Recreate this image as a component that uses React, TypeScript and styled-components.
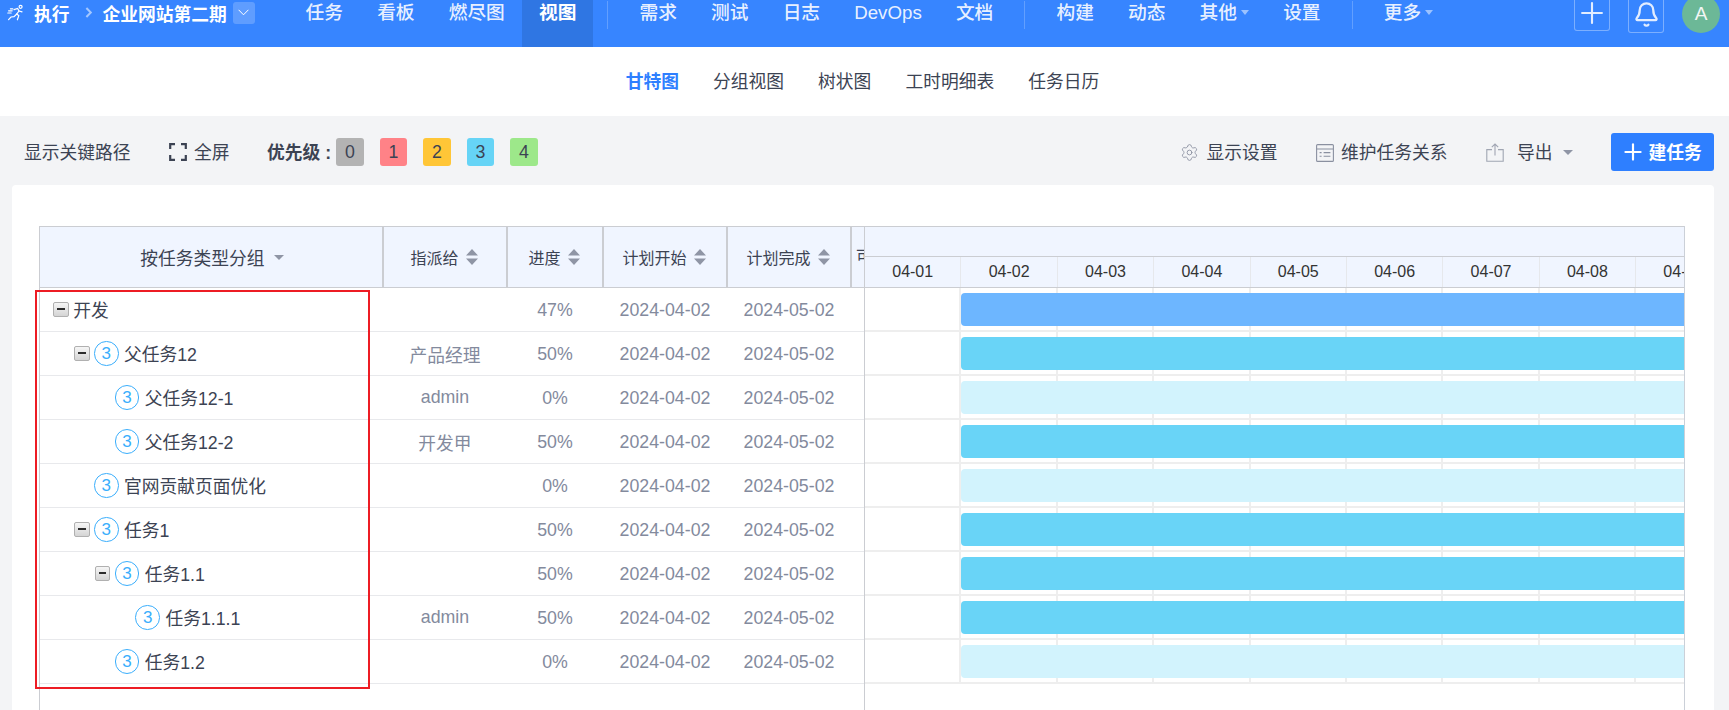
import React from 'react';
import styled, { createGlobalStyle } from 'styled-components';
import { Bell, Plus, Settings } from 'lucide-react';

const GlobalStyle = createGlobalStyle`
    html, body {
        margin: 0;
        height: 100%;
        overflow: hidden;
        background: #f3f4f6;
        color: #3c4353;
        font-family: 'Liberation Sans', 'Noto Sans CJK SC', sans-serif;
        font-size: 17.75px;
    }
    #root {
        height: 100%;
    }
`;

type NavEntry = { label: string; active?: boolean; caret?: boolean };

const navGroups: NavEntry[][] = [
    [{ label: '任务' }, { label: '看板' }, { label: '燃尽图' }, { label: '视图', active: true }],
    [{ label: '需求' }, { label: '测试' }, { label: '日志' }, { label: 'DevOps' }, { label: '文档' }],
    [{ label: '构建' }, { label: '动态' }, { label: '其他', caret: true }, { label: '设置' }],
    [{ label: '更多', caret: true }],
];

const subTabs = ['甘特图', '分组视图', '树状图', '工时明细表', '任务日历'];

const priorities = [
    { level: 0, color: '#b3b3b3' },
    { level: 1, color: '#ff8287' },
    { level: 2, color: '#ffc637' },
    { level: 3, color: '#66d4f6' },
    { level: 4, color: '#9de88a' },
];

const days = ['04-01', '04-02', '04-03', '04-04', '04-05', '04-06', '04-07', '04-08', '04-09'];

const MID = '#69d4f7';
const PALE = '#d2f3fd';
const GROUP = '#6db6ff';

type Task = {
    title: string;
    depth: number;
    toggle?: boolean;
    badge?: boolean;
    owner?: string;
    progress: string;
    bar: string;
};

const tasks: Task[] = [
    { title: '开发', depth: 0, toggle: true, progress: '47%', bar: GROUP },
    { title: '父任务12', depth: 1, toggle: true, badge: true, owner: '产品经理', progress: '50%', bar: MID },
    { title: '父任务12-1', depth: 2, badge: true, owner: 'admin', progress: '0%', bar: PALE },
    { title: '父任务12-2', depth: 2, badge: true, owner: '开发甲', progress: '50%', bar: MID },
    { title: '官网贡献页面优化', depth: 1, badge: true, progress: '0%', bar: PALE },
    { title: '任务1', depth: 1, toggle: true, badge: true, progress: '50%', bar: MID },
    { title: '任务1.1', depth: 2, toggle: true, badge: true, progress: '50%', bar: MID },
    { title: '任务1.1.1', depth: 3, badge: true, owner: 'admin', progress: '50%', bar: MID },
    { title: '任务1.2', depth: 2, badge: true, progress: '0%', bar: PALE },
];

const columns = [
    { label: '指派给' },
    { label: '进度' },
    { label: '计划开始' },
    { label: '计划完成' },
];

const RunnerIcon = () => (
    <svg width="17" height="17" viewBox="0 0 17 17" fill="none" stroke="#fff" strokeWidth="1.2" strokeLinecap="round">
        <circle cx="13.6" cy="2.8" r="1.5" />
        <path d="M7 5.6l3.6-1.2 1.4 2.6-2.2 3 2 1.8-1.4 4" />
        <path d="M9.8 10L7 12.6l-3 .4-2.4 2.6" />
        <path d="M12 7l3 .8" />
        <path d="M1.6 6.8h3.6M.8 9h3.4M3.4 4.8h2.4" />
    </svg>
);

const FullscreenIcon = () => (
    <svg width="18" height="18" viewBox="0 0 18 18" fill="none" stroke="#3c4353" strokeWidth="2.2">
        <path d="M1.2 6V1.2H6M12 1.2h4.8V6M16.8 12v4.8H12M6 16.8H1.2V12" />
    </svg>
);

const RelationIcon = () => (
    <svg width="18" height="19" viewBox="0 0 18 19" fill="none" stroke="#8a90a0" strokeWidth="1.1">
        <rect x="0.6" y="1.6" width="16.8" height="16.8" rx="1" />
        <path d="M.6 6h16.8M3.6 9.6h2M7.6 9.6h6.8M3.6 13.2h2M7.6 13.2h6.8" />
    </svg>
);

const ExportIcon = () => (
    <svg width="18" height="19" viewBox="0 0 18 19" fill="none" stroke="#a0a5b2" strokeWidth="1.1">
        <path d="M6 6.6H.8v11.6h16.4V6.6H12" />
        <path d="M9 12.4V1.2M5.8 4.2L9 1l3.2 3.2" />
    </svg>
);

const Chevron = () => (
    <svg width="11" height="7" viewBox="0 0 11 7" fill="none" stroke="#fff" strokeWidth="1">
        <path d="M.6.8l4.9 5 4.9-5" />
    </svg>
);

const BreadcrumbArrow = () => (
    <svg width="9" height="11" viewBox="0 0 9 11" fill="none" stroke="rgba(255,255,255,0.55)" strokeWidth="2">
        <path d="M1.4 1l4.4 4.5-4.4 4.5" />
    </svg>
);

const SortIcon = () => (
    <svg width="12" height="16" viewBox="0 0 12 16" fill="#8f95a5">
        <path d="M6 0l6 6.6H0zM6 16L0 9.4h12z" />
    </svg>
);

const App = (): React.ReactElement => {
    return (
        <Page>
            <GlobalStyle />
            <TopBar>
                <Brand>
                    <RunnerIcon />
                    <BrandLabel>执行</BrandLabel>
                    <BreadcrumbArrow />
                    <ProjectName>企业网站第二期</ProjectName>
                    <ProjectSwitch>
                        <Chevron />
                    </ProjectSwitch>
                </Brand>
                <Nav>
                    {navGroups.map((group, i) => (
                        <React.Fragment key={i}>
                            {i > 0 && <NavDivider />}
                            {group.map((item) => (
                                <NavItem key={item.label} $active={item.active}>
                                    {item.label}
                                    {item.caret && <NavCaret />}
                                </NavItem>
                            ))}
                        </React.Fragment>
                    ))}
                </Nav>
                <TopActions>
                    <TopButton $height={31}>
                        <Plus size={34} strokeWidth={1.5} />
                    </TopButton>
                    <TopButton $height={33}>
                        <Bell size={27} strokeWidth={2} />
                    </TopButton>
                    <Avatar>A</Avatar>
                </TopActions>
            </TopBar>

            <SubNav>
                {subTabs.map((tab, i) => (
                    <SubTab key={tab} $active={i === 0}>
                        {tab}
                    </SubTab>
                ))}
            </SubNav>

            <Toolbar>
                <ToolGroup>
                    <ToolText>显示关键路径</ToolText>
                    <ToolItem>
                        <FullscreenIcon />
                        <ToolText>全屏</ToolText>
                    </ToolItem>
                    <PriorityRow>
                        <PriorityLabel>优先级 :</PriorityLabel>
                        {priorities.map((p) => (
                            <PriorityBadge key={p.level} $color={p.color}>
                                {p.level}
                            </PriorityBadge>
                        ))}
                    </PriorityRow>
                </ToolGroup>
                <ToolGroup>
                    <ToolItem>
                        <Settings size={19} strokeWidth={1.1} color="#8a90a0" />
                        <ToolText>显示设置</ToolText>
                    </ToolItem>
                    <ToolItem>
                        <RelationIcon />
                        <ToolText>维护任务关系</ToolText>
                    </ToolItem>
                    <ExportItem>
                        <ExportIcon />
                        <ToolText>导出</ToolText>
                        <ExportCaret />
                    </ExportItem>
                    <CreateButton>
                        <Plus size={26} strokeWidth={2} />
                        <ToolText>建任务</ToolText>
                    </CreateButton>
                </ToolGroup>
            </Toolbar>

            <Card>
                <Gantt>
                    <GridPane>
                        <GridHead>
                            <HeadCell>
                                按任务类型分组
                                <GroupCaret />
                            </HeadCell>
                            {columns.map((c) => (
                                <HeadCell key={c.label}>
                                    {c.label}
                                    <SortIcon />
                                </HeadCell>
                            ))}
                            <ClippedCell>可</ClippedCell>
                        </GridHead>
                        {tasks.map((t) => (
                            <GridRow key={t.title}>
                                <TreeCell $depth={t.depth}>
                                    <ToggleSlot>{t.toggle && <ToggleBox />}</ToggleSlot>
                                    {t.badge && <PriorityCircle>3</PriorityCircle>}
                                    <TaskTitle>{t.title}</TaskTitle>
                                </TreeCell>
                                <OwnerCell>{t.owner}</OwnerCell>
                                <DataCell>{t.progress}</DataCell>
                                <DataCell>2024-04-02</DataCell>
                                <DataCell>2024-05-02</DataCell>
                            </GridRow>
                        ))}
                    </GridPane>
                    <TimelinePane>
                        <TimelineTop />
                        <DayRow>
                            {days.map((d) => (
                                <DayCell key={d}>{d}</DayCell>
                            ))}
                        </DayRow>
                        {tasks.map((t) => (
                            <BarRow key={t.title}>
                                <Bar $color={t.bar} />
                            </BarRow>
                        ))}
                    </TimelinePane>
                </Gantt>
                <Highlight />
            </Card>
        </Page>
    );
};

export default App;

const Page = styled.div`
    display: flex;
    flex-direction: column;
    height: 100%;
`;

const TopBar = styled.header`
    display: flex;
    flex: none;
    height: 47px;
    overflow: hidden;
    background: #3785ff;
    color: #fff;
`;

const Brand = styled.div`
    display: flex;
    align-items: center;
    flex: none;
    width: 288.5px;
    height: 25px;
    padding-left: 7px;
    box-sizing: border-box;
    font-weight: 700;
`;

const BrandLabel = styled.span`
    margin: 0 15px 0 10px;
`;

const ProjectName = styled.span`
    margin-left: 9px;
`;

const ProjectSwitch = styled.span`
    display: flex;
    align-items: center;
    justify-content: center;
    width: 22px;
    height: 22px;
    margin-left: 6px;
    border-radius: 3px;
    background: rgba(255, 255, 255, 0.2);
`;

const Nav = styled.nav`
    display: flex;
    align-items: flex-start;
`;

const NavItem = styled.a<{ $active?: boolean }>`
    display: flex;
    align-items: center;
    align-self: stretch;
    height: 47px;
    padding: 0 17.1px 22px;
    box-sizing: border-box;
    line-height: 25px;
    font-size: 18.7px;
    font-weight: ${(p) => (p.$active ? 700 : 500)};
    color: ${(p) => (p.$active ? '#fff' : 'rgba(255, 255, 255, 0.9)')};
    background: ${(p) => (p.$active ? '#2f76e3' : 'transparent')};
`;

const NavDivider = styled.span`
    width: 1px;
    height: 28px;
    margin: 1px 14px 0;
    background: rgba(255, 255, 255, 0.22);
`;

const NavCaret = styled.span`
    width: 0;
    height: 0;
    margin-left: 4px;
    border-style: solid;
    border-width: 5px 4.5px 0;
    border-color: rgba(255, 255, 255, 0.5) transparent transparent;
`;

const TopActions = styled.div`
    display: flex;
    align-items: flex-start;
    gap: 18px;
    margin-left: auto;
    padding-right: 9px;
`;

const TopButton = styled.span<{ $height: number }>`
    display: flex;
    align-items: center;
    justify-content: center;
    width: 36px;
    height: ${(p) => p.$height}px;
    padding-bottom: 4px;
    box-sizing: border-box;
    color: #e2edff;
    border: 1px solid rgba(255, 255, 255, 0.35);
    border-top: none;
    border-radius: 0 0 3px 3px;

    svg {
        flex: none;
    }
`;

const Avatar = styled.span`
    display: flex;
    align-items: center;
    justify-content: center;
    width: 38px;
    height: 38px;
    margin-top: -5px;
    border-radius: 50%;
    background: #6cb897;
    color: #f2f6f4;
    font-size: 19px;
`;

const SubNav = styled.div`
    display: flex;
    flex: none;
    align-items: center;
    justify-content: center;
    gap: 34px;
    height: 69px;
    padding: 0 4px 4px 0;
    box-sizing: border-box;
    background: #fff;
`;

const SubTab = styled.a<{ $active?: boolean }>`
    font-weight: ${(p) => (p.$active ? 700 : 400)};
    color: ${(p) => (p.$active ? '#2e7fff' : '#3c4353')};
`;

const Toolbar = styled.div`
    display: flex;
    flex: none;
    align-items: center;
    justify-content: space-between;
    height: 69px;
    padding: 3px 15px 0 24px;
    box-sizing: border-box;
`;

const ToolGroup = styled.div`
    display: flex;
    align-items: center;
    gap: 38.5px;
`;

const ToolItem = styled.span`
    display: flex;
    align-items: center;
    gap: 7px;
`;

const ToolText = styled.span`
    padding-bottom: 2px;
`;

const ExportItem = styled(ToolItem)`
    gap: 13px;
`;

const ExportCaret = styled.span`
    width: 0;
    height: 0;
    margin-left: -3px;
    border-style: solid;
    border-width: 5px 5px 0;
    border-color: #8f95a5 transparent transparent;
`;

const PriorityRow = styled.div`
    display: flex;
    align-items: center;
    gap: 16px;
    margin-left: -1px;
`;

const PriorityLabel = styled.span`
    margin-right: -11px;
    padding-bottom: 2px;
    font-weight: 700;
`;

const PriorityBadge = styled.span<{ $color: string }>`
    display: flex;
    align-items: center;
    justify-content: center;
    width: 27.5px;
    height: 28px;
    border-radius: 3px;
    background: ${(p) => p.$color};
`;

const CreateButton = styled.button`
    display: flex;
    align-items: center;
    justify-content: center;
    gap: 2.5px;
    width: 103px;
    height: 38px;
    padding: 0 3px 0 0;
    border: none;
    border-radius: 3px;
    background: #2e7fff;
    color: #fff;
    font: inherit;
    font-weight: 700;
`;

const Card = styled.main`
    position: relative;
    flex: 1;
    margin: 0 15px 0 12px;
    padding: 41px 29px 0 27px;
    border-radius: 4px 4px 0 0;
    background: #fff;
`;

const Gantt = styled.div`
    display: flex;
    height: 100%;
    border-left: 1px solid #cbcdd2;
`;

const GridPane = styled.div`
    flex: none;
    width: 824px;
`;

const GridHead = styled.div`
    display: grid;
    grid-template-columns: 344px 124px 96px 124px 124px 12px;
    height: 62px;
    box-sizing: border-box;
    border-top: 1px solid #cbcdd2;
    border-bottom: 1px solid #cbcdd2;
    background: #f0f5ff;
    font-size: 16px;
`;

const HeadCell = styled.div`
    display: flex;
    align-items: center;
    justify-content: center;
    gap: 7px;
    padding-right: 2px;
    box-sizing: border-box;
    border-right: 2px solid #cbcdd2;

    &:first-child {
        font-size: 17.75px;
        padding: 0 0 0 2px;
    }
`;

const GroupCaret = styled.span`
    width: 0;
    height: 0;
    margin-left: 2px;
    border-style: solid;
    border-width: 5px 5px 0;
    border-color: #8f95a5 transparent transparent;
`;

const ClippedCell = styled.div`
    display: flex;
    align-items: center;
    padding: 0 0 4px 4px;
    box-sizing: border-box;
    overflow: hidden;
    white-space: nowrap;
`;

const GridRow = styled.div`
    display: grid;
    grid-template-columns: 344px 124px 96px 124px 124px 12px;
    height: 44px;
    box-sizing: border-box;
    border-bottom: 1px solid #e8e9ec;
`;

const TreeCell = styled.div<{ $depth: number }>`
    display: flex;
    align-items: center;
    padding-left: ${(p) => 13.3 + p.$depth * 20.7}px;
`;

const TaskTitle = styled.span`
    padding-bottom: 2px;
`;

const ToggleSlot = styled.span`
    flex: none;
    display: flex;
    align-items: center;
    width: 20px;
`;

const ToggleBox = styled.span`
    position: relative;
    display: block;
    width: 15.5px;
    height: 15.5px;
    box-sizing: border-box;
    border: 1.5px solid #b0b0b0;
    border-radius: 2px;
    background: linear-gradient(#f6f6f6, #d4d4d4);

    &::after {
        content: '';
        position: absolute;
        left: 3px;
        right: 3px;
        top: 5.5px;
        height: 1.6px;
        background: #2c2c2c;
    }
`;

const PriorityCircle = styled.span`
    flex: none;
    display: flex;
    align-items: center;
    justify-content: center;
    width: 24.5px;
    height: 24.5px;
    margin-right: 5.5px;
    box-sizing: border-box;
    border: 1px solid #3aaefc;
    border-radius: 50%;
    color: #3aaefc;
    font-size: 17px;
`;

const DataCell = styled.div`
    display: flex;
    align-items: center;
    justify-content: center;
    padding: 2px 2px 0 0;
    color: #838a9d;
`;

const OwnerCell = styled(DataCell)`
    padding-top: 0;
`;

const TimelinePane = styled.div`
    flex: none;
    width: 821px;
    box-sizing: border-box;
    overflow: hidden;
    border-left: 1px solid #cbcdd2;
    border-right: 1px solid #cbd0d8;
`;

const TimelineTop = styled.div`
    height: 31px;
    box-sizing: border-box;
    border-top: 1px solid #cbcdd2;
    border-bottom: 1px solid #cbcdd2;
    background: #f0f5ff;
`;

const DayRow = styled.div`
    display: flex;
    height: 31px;
    box-sizing: border-box;
    border-bottom: 1px solid #cbcdd2;
    background: #f0f5ff;
`;

const DayCell = styled.div`
    flex: none;
    display: flex;
    align-items: center;
    justify-content: center;
    width: 96.4px;
    box-sizing: border-box;
    border-right: 1px solid #e6e8ec;
    color: #333;
    font-size: 16px;
`;

const BarRow = styled.div`
    height: 44px;
    padding: 5px 0 0 96px;
    box-sizing: border-box;
    border-bottom: 2px solid #eeeeee;
    background: repeating-linear-gradient(to right, transparent 0 94.4px, #eeeeee 94.4px 96.4px);
`;

const Bar = styled.div<{ $color: string }>`
    height: 33px;
    border-radius: 4px 0 0 4px;
    background: ${(p) => p.$color};
`;

const Highlight = styled.div`
    position: absolute;
    left: 23px;
    top: 105px;
    width: 335px;
    height: 399px;
    box-sizing: border-box;
    border: 2px solid #ed1c24;
`;
